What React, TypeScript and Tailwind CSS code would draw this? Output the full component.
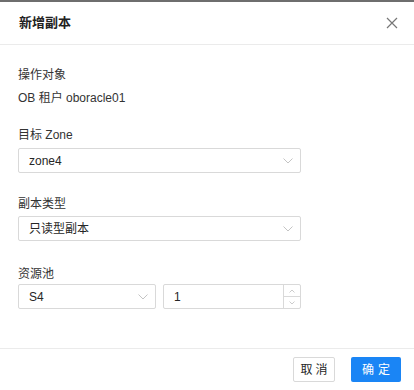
import React from "react";

const font = {
  fontFamily: '"Liberation Sans", "Noto Sans CJK SC", sans-serif',
};

function Chevron() {
  return (
    <svg width="10" height="6" viewBox="0 0 10 6" className="shrink-0">
      <path d="M0.5 0.5 L5 5 L9.5 0.5" fill="none" stroke="#c4c4c4" strokeWidth="1" />
    </svg>
  );
}

function Select({ value, className }: { value: string; className?: string }) {
  return (
    <div
      className={`h-[25px] flex items-center justify-between pl-[10px] pr-[7px] border border-[#d9d9d9] rounded-[2px] bg-white ${className ?? ""}`}
    >
      <span className="text-[12px] text-[#262626]">{value}</span>
      <Chevron />
    </div>
  );
}

function Label({ children, className }: { children: React.ReactNode; className?: string }) {
  return <div className={`text-[12px] leading-[20px] text-[#333] ${className ?? ""}`}>{children}</div>;
}

export default function App() {
  return (
    <div style={font} className="w-[414px] h-[390px] bg-white flex flex-col overflow-hidden">
      <div className="h-[2px] bg-[#6e6e6e]" />
      <div className="h-[43px] flex items-center justify-between pl-[19px] pr-[16px] border-b border-[#ebebeb]">
        <span className="text-[13px] font-bold text-[#222]">新增副本</span>
        <svg width="12" height="12" viewBox="0 0 12 12">
          <path d="M1 1 L11 11 M11 1 L1 11" stroke="#777" strokeWidth="1.2" />
        </svg>
      </div>
      <div className="flex-1 px-[18px] pt-[20px]">
        <Label>操作对象</Label>
        <Label className="mt-[3px] text-[#222]">OB 租户 oboracle01</Label>
        <Label className="mt-[17px]">目标 Zone</Label>
        <Select value="zone4" className="mt-[3px] w-[283px]" />
        <Label className="mt-[21px]">副本类型</Label>
        <Select value="只读型副本" className="mt-[2px] w-[283px]" />
        <Label className="mt-[23px]">资源池</Label>
        <div className="mt-[0px] flex gap-[7px] w-[283px]">
          <Select value="S4" className="w-[138px]" />
          <div className="flex-1 h-[25px] flex border border-[#d9d9d9] rounded-[2px]">
            <span className="flex-1 pl-[10px] flex items-center text-[12px] text-[#262626]">1</span>
            <div className="w-[17px] flex flex-col border-l border-[#d9d9d9]">
              <div className="flex-1 flex items-center justify-center border-b border-[#d9d9d9]">
                <svg width="6" height="4" viewBox="0 0 6 4">
                  <path d="M0.5 3.5 L3 1 L5.5 3.5" fill="none" stroke="#bfbfbf" strokeWidth="0.8" />
                </svg>
              </div>
              <div className="flex-1 flex items-center justify-center">
                <svg width="6" height="4" viewBox="0 0 6 4">
                  <path d="M0.5 0.5 L3 3 L5.5 0.5" fill="none" stroke="#bfbfbf" strokeWidth="0.8" />
                </svg>
              </div>
            </div>
          </div>
        </div>
      </div>
      <div className="h-[42px] flex items-start justify-end gap-[16px] pt-[8px] pr-[13px] border-t border-[#ebebeb]">
        <button className="h-[25px] w-[42px] border border-[#d9d9d9] rounded-[2px] bg-white text-[12px] text-[#262626] tracking-[3px] pl-[3px]">
          取消
        </button>
        <button className="h-[25px] w-[50px] rounded-[2px] bg-[#1a85f5] text-[12px] text-white tracking-[4px] pl-[4px]">
          确定
        </button>
      </div>
    </div>
  );
}
